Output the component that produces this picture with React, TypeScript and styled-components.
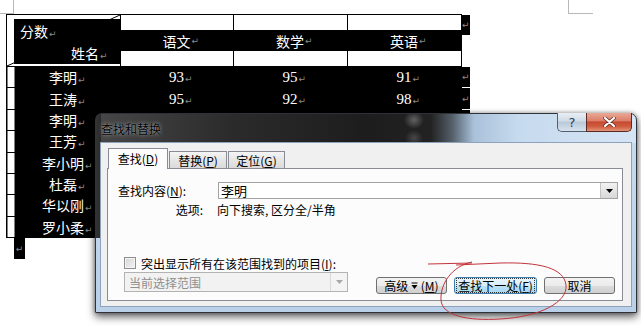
import React from 'react';
import styled, { createGlobalStyle } from 'styled-components';

const GlobalStyle = createGlobalStyle`
  html, body { margin: 0; padding: 0; background: #fff; }
  body { width: 641px; height: 326px; overflow: hidden; font-family: "Noto Sans CJK SC", sans-serif; }
`;

const Page = styled.div`
  position: relative;
  width: 641px;
  height: 326px;
  padding: 14px 0 0 6px;
  box-sizing: border-box;
  overflow: hidden;
`;

const CornerMark = styled.div<{ $side: 'left' | 'right' }>`
  position: absolute;
  top: 0;
  height: 13px;
  ${(p) =>
    p.$side === 'left'
      ? 'left: 0; width: 13px; border-right: 1px solid #b8b8b8; border-bottom: 1px solid #b8b8b8;'
      : 'left: 568px; width: 24px; border-left: 1px solid #b8b8b8; border-bottom: 1px solid #b8b8b8;'}
`;

const WordTable = styled.table`
  border-collapse: collapse;
  table-layout: fixed;
  color: #fff;
  font-family: "Noto Sans CJK SC", sans-serif;
  font-size: 14px;
  line-height: 16px;
`;

const Cell = styled.td`
  border: 1px solid #000;
  padding: 0;
  vertical-align: top;
`;

const CornerCell = styled(Cell)`
  height: 51px;
  position: relative;
  background: #fff;
`;

const Diagonal = styled.svg`
  position: absolute;
  left: 0;
  top: 0;
  width: 100%;
  height: 100%;
`;

const CornerFill = styled.div`
  position: relative;
  margin: 4px 0 2px 7px;
  height: 45px;
  box-sizing: border-box;
  padding-top: 4px;
  background: #000;
  font-size: 14px;
  line-height: 16px;
`;

const CornerLine = styled.div<{ $indent: number; $gap?: number }>`
  padding-left: ${(p) => p.$indent}px;
  margin-top: ${(p) => p.$gap ?? 0}px;
  height: 16px;
  white-space: nowrap;
`;

const HeadCell = styled(Cell)`
  background: #fff;
`;

const HeadBand = styled.div`
  margin-top: 15px;
  height: 21px;
  background: #000;
  display: flex;
  align-items: center;
  justify-content: center;
  font-size: 14px;
`;

const EndCell = styled.td<{ $line?: boolean }>`
  padding: 0;
  border: none;
  ${(p) => (p.$line ? 'border-bottom: 1px solid #fff;' : '')}
  vertical-align: top;
  font-size: 9px;
  line-height: 10px;
`;

const EndBox = styled.div<{ $h: number }>`
  height: ${(p) => p.$h}px;
  background: #000;
  display: flex;
  align-items: center;
  justify-content: center;
`;

const DataRow = styled.tr`
  height: 21.375px;
`;

const DataCell = styled(Cell)<{ $first?: boolean; $num?: boolean }>`
  background: ${(p) => (p.$first ? 'linear-gradient(90deg, #fff 0 7px, #000 7px)' : '#000')};
  text-align: center;
  vertical-align: middle;
  font-family: ${(p) => (p.$num ? '"Liberation Serif", serif' : '"Noto Sans CJK SC", sans-serif')};
  font-size: ${(p) => (p.$num ? 15 : 14)}px;
  line-height: 16px;
  white-space: nowrap;
`;

const DataEnd = styled(EndCell)`
  background: #000;
  vertical-align: middle;
  text-align: center;
`;

const Mark = styled.span`
  display: inline-block;
  width: 0;
  margin-left: 1px;
  white-space: nowrap;
  font-family: "DejaVu Sans", sans-serif;
  font-size: 9px;
  line-height: 10px;
  color: #8a8a8a;
  vertical-align: baseline;
`;

const EndMark = styled.span`
  font-family: "DejaVu Sans", sans-serif;
  font-size: 9px;
  color: #8a8a8a;
  line-height: 10px;
`;

const ParaMark = styled.div`
  margin-left: 8px;
  width: 11px;
  height: 21px;
  background: #000;
  display: flex;
  align-items: center;
  justify-content: center;
`;

/* ---------- dialog ---------- */

const Window = styled.div`
  position: absolute;
  left: 95px;
  top: 113px;
  width: 542px;
  height: 200px;
  box-sizing: border-box;
  border: 1px solid #2f3338;
  border-radius: 7px 7px 0 0;
  padding: 0 4px 5px 4px;
  display: flex;
  flex-direction: column;
  background:
    radial-gradient(ellipse 10px 9px at 318px 6px, rgba(150, 150, 150, 0.55), transparent),
    radial-gradient(ellipse 9px 8px at 318px 24px, rgba(120, 120, 120, 0.45), transparent),
    linear-gradient(90deg, #333 0, #2a2a2a 100%) 0 0 / 5px 124px no-repeat,
    linear-gradient(90deg, #474747 0%, #2b2b2b 25%, #1d1d1d 50%, #222 62%, #55606b 66%, #a9c1da 70%, #c6daee 78%, #d6e5f4 100%) 0 0 / 100% 29px no-repeat,
    linear-gradient(180deg, #c8dcf0, #b9d0e8);
  box-shadow: 0 4px 9px rgba(0, 0, 0, 0.6), 0 0 4px rgba(0, 0, 0, 0.35);
`;

const TitleBar = styled.div`
  height: 28px;
  flex-shrink: 0;
  display: flex;
  align-items: center;
`;

const TitleText = styled.span`
  margin-left: 1px;
  font-size: 12px;
  color: #000;
  text-shadow: 0 0 4px rgba(255, 255, 255, 0.55), 0 0 1px rgba(255, 255, 255, 0.4);
`;

const CaptionGroup = styled.div`
  margin-left: auto;
  align-self: flex-start;
  margin-top: -1px;
  display: flex;
`;

const HelpButton = styled.div`
  width: 29px;
  height: 19px;
  box-sizing: border-box;
  border: 1px solid #56606c;
  border-top: none;
  border-right: none;
  border-radius: 0 0 0 5px;
  background: linear-gradient(180deg, #e8eef5 0%, #d0dbe6 45%, #b9c8d8 50%, #d6e2ee 100%);
  display: flex;
  align-items: center;
  justify-content: center;
  font-family: "DejaVu Sans", sans-serif;
  font-size: 13px;
  color: #34404e;
`;

const CloseButton = styled.div`
  width: 46px;
  height: 19px;
  box-sizing: border-box;
  border: 1px solid #5b2a24;
  border-top: none;
  border-radius: 0 0 5px 0;
  background: linear-gradient(180deg, #eaa896 0%, #dc806b 42%, #c64a32 50%, #cf5d40 75%, #e39478 100%);
  display: flex;
  align-items: center;
  justify-content: center;
`;

const Client = styled.div`
  flex: 1;
  background: #f0f0f0;
  border: 1px solid #8da3bb;
  display: flex;
  flex-direction: column;
  padding: 5px 8px 5px 6px;
`;

const TabStrip = styled.div`
  display: flex;
  align-items: flex-end;
  gap: 1px;
  height: 21px;
  padding-left: 1px;
  margin-bottom: -1px;
  position: relative;
  z-index: 1;
`;

const Tab = styled.div<{ $active?: boolean; $w: number }>`
  box-sizing: border-box;
  width: ${(p) => p.$w}px;
  height: ${(p) => (p.$active ? 21 : 18)}px;
  border: 1px solid #898c95;
  border-bottom: ${(p) => (p.$active ? 'none' : '1px solid #898c95')};
  background: ${(p) => (p.$active ? '#fcfcfc' : 'linear-gradient(180deg, #f4f4f4, #e6e6e6 50%, #dadada)')};
  display: flex;
  align-items: center;
  justify-content: center;
  padding-bottom: ${(p) => (p.$active ? 2 : 0)}px;
  font-size: 12px;
  color: #000;
  white-space: nowrap;
`;

const Panel = styled.div`
  flex: 1;
  border: 1px solid #898c95;
  background: #fcfcfc;
  display: flex;
  flex-direction: column;
  padding: 13px 4px 6px 10px;
  font-size: 12px;
  color: #000;
`;

const FieldRow = styled.div`
  display: flex;
  align-items: center;
  height: 17px;
`;

const FieldLabel = styled.span`
  width: 100px;
  flex-shrink: 0;
  white-space: nowrap;
`;

const FindInput = styled.div`
  width: 400px;
  height: 17px;
  box-sizing: border-box;
  border: 1px solid #a3a3a3;
  background: #fff;
  display: flex;
  align-items: center;
  padding-left: 2px;
  font-size: 13px;
`;

const DropButton = styled.div<{ $disabled?: boolean }>`
  margin-left: auto;
  width: 17px;
  height: 100%;
  box-sizing: border-box;
  border-left: 1px solid ${(p) => (p.$disabled ? '#d9d9d9' : '#c3c3c3')};
  background: ${(p) => (p.$disabled ? '#f4f4f4' : 'linear-gradient(180deg, #f2f2f2, #d8d8d8)')};
  display: flex;
  align-items: center;
  justify-content: center;
`;

const OptionRow = styled.div`
  display: flex;
  align-items: center;
  height: 14px;
  margin-top: 3px;
  white-space: nowrap;
`;

const OptionLabel = styled.span`
  width: 85px;
  text-align: right;
`;

const OptionValue = styled.span`
  margin-left: 14px;
`;

const BottomArea = styled.div`
  margin-top: auto;
  display: flex;
  align-items: flex-end;
`;

const LeftGroup = styled.div`
  margin-left: 6px;
  margin-bottom: 2px;
  display: flex;
  flex-direction: column;
  gap: 2px;
`;

const CheckRow = styled.div`
  display: flex;
  align-items: center;
  gap: 5px;
  height: 14px;
  white-space: nowrap;
`;

const CheckBox = styled.div`
  width: 12px;
  height: 12px;
  box-sizing: border-box;
  border: 1px solid #8f8f8f;
  background: linear-gradient(135deg, #d6d6d6, #f3f3f3);
  box-shadow: inset 0 0 0 1px #f4f4f4;
`;

const ScopeCombo = styled.div`
  width: 224px;
  height: 20px;
  box-sizing: border-box;
  border: 1px solid #b3b3b3;
  background: #f2f2f2;
  color: #8f8f8f;
  display: flex;
  align-items: center;
  padding-left: 4px;
  font-size: 12px;
`;

const ButtonGroup = styled.div`
  margin-left: auto;
  margin-right: 3px;
  display: flex;
  gap: 7px;
`;

const DlgButton = styled.div<{ $w: number; $primary?: boolean }>`
  width: ${(p) => p.$w}px;
  height: 17px;
  box-sizing: border-box;
  border: 1px solid ${(p) => (p.$primary ? '#3c7fb1' : '#707070')};
  border-radius: 3px;
  background: ${(p) =>
    p.$primary
      ? 'linear-gradient(180deg, #e9f5fc 0%, #d7eefb 50%, #bde3f8 51%, #a6d6f2 100%)'
      : 'linear-gradient(180deg, #f3f3f3 0%, #ebebeb 50%, #dddddd 51%, #cfcfcf 100%)'};
  display: flex;
  align-items: center;
  justify-content: center;
  font-size: 12px;
  white-space: nowrap;
  color: #000;
`;

const FocusRing = styled.span`
  outline: 1px dotted #333;
  outline-offset: 0px;
  padding: 0 1px;
  line-height: 13px;
`;

const Annotation = styled.svg`
  position: absolute;
  left: 0;
  top: 0;
  width: 641px;
  height: 326px;
  pointer-events: none;
`;

const names = ['李明', '王涛', '李明', '王芳', '李小明', '杜磊', '华以刚', '罗小柔'];
const scores: Array<[number, number, number] | null> = [[93, 95, 91], [95, 92, 98], null, null, null, null, null, null];

const Arrow = ({ color }: { color: string }) => (
  <svg width="7" height="4" viewBox="0 0 7 4">
    <path d="M0 0 L7 0 L3.5 4 Z" fill={color} />
  </svg>
);

export default function App() {
  return (
    <>
      <GlobalStyle />
      <Page>
        <CornerMark $side="left" />
        <CornerMark $side="right" />
        <WordTable>
          <colgroup>
            <col style={{ width: 114 }} />
            <col style={{ width: 113 }} />
            <col style={{ width: 114 }} />
            <col style={{ width: 114 }} />
            <col style={{ width: 8 }} />
          </colgroup>
          <tbody>
            <tr>
              <CornerCell>
                <Diagonal viewBox="0 0 100 100" preserveAspectRatio="none">
                  <line x1="0" y1="100" x2="100" y2="0" stroke="#000" strokeWidth="1" vectorEffect="non-scaling-stroke" />
                </Diagonal>
                <CornerFill>
                  <CornerLine $indent={6}>
                    分数<Mark>↵</Mark>
                  </CornerLine>
                  <CornerLine $indent={57} $gap={6}>
                    姓名<Mark>↵</Mark>
                  </CornerLine>
                </CornerFill>
              </CornerCell>
              {['语文', '数学', '英语'].map((h) => (
                <HeadCell key={h}>
                  <HeadBand>
                    {h}
                    <Mark>↵</Mark>
                  </HeadBand>
                </HeadCell>
              ))}
              <EndCell>
                <EndBox $h={20}>
                  <EndMark>↵</EndMark>
                </EndBox>
              </EndCell>
            </tr>
            {names.map((n, i) => {
              const s = scores[i];
              return (
                <DataRow key={i}>
                  <DataCell $first>
                    {n}
                    <Mark>↵</Mark>
                  </DataCell>
                  {[0, 1, 2].map((c) => (
                    <DataCell key={c} $num>
                      {s ? (
                        <>
                          {s[c]}
                          <Mark>↵</Mark>
                        </>
                      ) : null}
                    </DataCell>
                  ))}
                  <DataEnd $line>
                    <EndMark>↵</EndMark>
                  </DataEnd>
                </DataRow>
              );
            })}
          </tbody>
        </WordTable>
        <ParaMark>
          <EndMark>↵</EndMark>
        </ParaMark>

        <Window>
          <TitleBar>
            <TitleText>查找和替换</TitleText>
            <CaptionGroup>
              <HelpButton>?</HelpButton>
              <CloseButton>
                <svg width="13" height="10" viewBox="0 0 13 10">
                  <path d="M2 1 L11 9 M11 1 L2 9" stroke="#6b2a20" strokeWidth="3.6" strokeLinecap="round" />
                  <path d="M2 1 L11 9 M11 1 L2 9" stroke="#fff" strokeWidth="2.2" strokeLinecap="round" />
                </svg>
              </CloseButton>
            </CaptionGroup>
          </TitleBar>
          <Client>
            <TabStrip>
              <Tab $active $w={60}>
                查找(<u>D</u>)
              </Tab>
              <Tab $w={58}>
                替换(<u>P</u>)
              </Tab>
              <Tab $w={57}>
                定位(<u>G</u>)
              </Tab>
            </TabStrip>
            <Panel>
              <FieldRow>
                <FieldLabel>
                  查找内容(<u>N</u>):
                </FieldLabel>
                <FindInput>
                  李明
                  <DropButton>
                    <Arrow color="#000" />
                  </DropButton>
                </FindInput>
              </FieldRow>
              <OptionRow>
                <OptionLabel>选项:</OptionLabel>
                <OptionValue>向下搜索, 区分全/半角</OptionValue>
              </OptionRow>
              <BottomArea>
                <LeftGroup>
                  <CheckRow>
                    <CheckBox />
                    <span>
                      突出显示所有在该范围找到的项目(<u>I</u>):
                    </span>
                  </CheckRow>
                  <ScopeCombo>
                    当前选择范围
                    <DropButton $disabled>
                      <Arrow color="#a8a8a8" />
                    </DropButton>
                  </ScopeCombo>
                </LeftGroup>
                <ButtonGroup>
                  <DlgButton $w={71}>
                    高级&nbsp;
                    <svg width="7" height="8" viewBox="0 0 7 8">
                      <path d="M0.5 1 L6.5 1" stroke="#000" strokeWidth="1" />
                      <path d="M0.5 3 L6.5 3 L3.5 7 Z" fill="#000" />
                    </svg>
                    &nbsp;(<u>M</u>)
                  </DlgButton>
                  <DlgButton $w={83} $primary>
                    <FocusRing>
                      查找下一处(<u>F</u>)
                    </FocusRing>
                  </DlgButton>
                  <DlgButton $w={71}>取消</DlgButton>
                </ButtonGroup>
              </BottomArea>
            </Panel>
          </Client>
        </Window>

        <Annotation viewBox="0 0 641 326">
          <path d="M428 264 L472 263" stroke="#c3343c" strokeWidth="1" fill="none" />
          <path
            d="M472 262 C452 266 440 284 441 300 C442 316 468 321 500 319 C540 317 568 302 566 285 C564 268 540 262 500 263 L456 265"
            stroke="#c3343c"
            strokeWidth="1"
            fill="none"
          />
        </Annotation>
      </Page>
    </>
  );
}
